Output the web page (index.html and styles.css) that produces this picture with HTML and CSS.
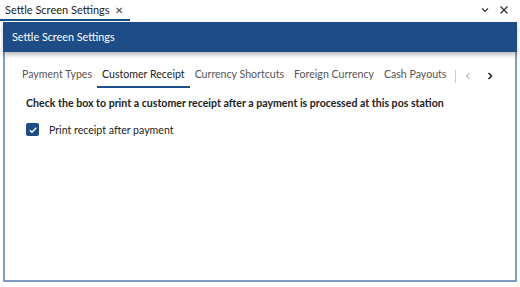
FILE: index.html
```html
<!DOCTYPE html>
<html lang="en">
<head>
  <meta charset="UTF-8">
  <title>Settle Screen Settings</title>
  <link rel="stylesheet" href="styles.css">
</head>
<body>
  <div class="doc-bar">
    <div class="doc-tab">
      <span>Settle Screen Settings</span>
      <span class="doc-close">&#x2715;</span>
    </div>
    <div class="doc-tools">
      <svg width="10" height="10" viewBox="0 0 10 10"><path d="M2 3.5 L5 6.5 L8 3.5" fill="none" stroke="#333" stroke-width="1.2"/></svg>
      <svg width="10" height="10" viewBox="0 0 10 10"><path d="M1.5 1.5 L8.5 8.5 M8.5 1.5 L1.5 8.5" fill="none" stroke="#333" stroke-width="1.3"/></svg>
    </div>
  </div>

  <div class="panel">
    <div class="panel-header">Settle Screen Settings</div>
    <div class="tabs">
      <span class="tab">Payment Types</span>
      <span class="tab active">Customer Receipt</span>
      <span class="tab">Currency Shortcuts</span>
      <span class="tab">Foreign Currency</span>
      <span class="tab">Cash Payouts</span>
      <span class="tab-sep"></span>
      <span class="tab-nav">
        <svg width="8" height="10" viewBox="0 0 8 10"><path d="M5.5 2 L2.5 5 L5.5 8" fill="none" stroke="#bbb" stroke-width="1.1"/></svg>
      </span>
      <span class="tab-nav">
        <svg width="8" height="10" viewBox="0 0 8 10"><path d="M2.5 2 L5.5 5 L2.5 8" fill="none" stroke="#222" stroke-width="1.5"/></svg>
      </span>
    </div>
    <div class="content">
      <p class="hint">Check the box to print a customer receipt after a payment is processed at this pos station</p>
      <label class="check">
        <span class="box">
          <svg width="12" height="12" viewBox="0 0 12 12"><path d="M2.8 6.2 L5 8.3 L9.3 3.8" fill="none" stroke="#fff" stroke-width="1.4"/></svg>
        </span>
        Print receipt after payment
      </label>
    </div>
  </div>
</body>
</html>
```

FILE: styles.css
```css
html, body {
  margin: 0;
  padding: 0;
}
body {
  font-family: 'Lato', sans-serif;
  font-size: 10.6px;
  color: #222;
  background: #fff;
  width: 520px;
  height: 287px;
}
.doc-bar {
  display: flex;
  justify-content: space-between;
  align-items: flex-start;
  height: 22px;
}
.doc-tab {
  display: flex;
  align-items: center;
  gap: 5px;
  height: 19px;
  padding: 0 0 0 5px;
  width: 125px;
  border-bottom: 2px solid #1d4e89;
  white-space: nowrap;
  font-size: 11px;
}
.doc-close {
  font-size: 10px;
  color: #444;
}
.doc-tools {
  display: flex;
  gap: 9px;
  padding: 5px 11px 0 0;
}
.panel {
  margin: 0 3px 0 3px;
  height: 260px;
  border: 2px solid #7d9bc3;
  border-top: none;
  box-sizing: border-box;
}
.panel-header {
  background: #1d4c86;
  color: #fff;
  height: 30px;
  line-height: 30px;
  margin: 0 -2px;
  padding-left: 9px;
  font-size: 10.8px;
  box-shadow: 0 3px 4px rgba(0, 0, 0, 0.25);
}
.tabs {
  display: flex;
  align-items: center;
  margin-top: 12px;
  padding-left: 12px;
  height: 24px;
  color: #555;
}
.tab {
  padding: 0 5px;
  height: 22px;
  line-height: 21px;
  border-bottom: 2px solid transparent;
  white-space: nowrap;
}
.tab.active {
  color: #222;
  border-bottom-color: #1d4e89;
}
.tab-sep {
  width: 1px;
  height: 13px;
  background: #ccc;
  margin: 0 1px 0 4px;
}
.tab-nav {
  display: flex;
  width: 22px;
  justify-content: center;
}
.content {
  padding: 9px 21px;
}
.hint {
  font-weight: bold;
  margin: 0 0 14px 0;
}
.check {
  display: flex;
  align-items: center;
  gap: 10px;
}
.box {
  display: flex;
  align-items: center;
  justify-content: center;
  width: 13px;
  height: 13px;
  background: #1d4c86;
  border-radius: 2px;
}
```
